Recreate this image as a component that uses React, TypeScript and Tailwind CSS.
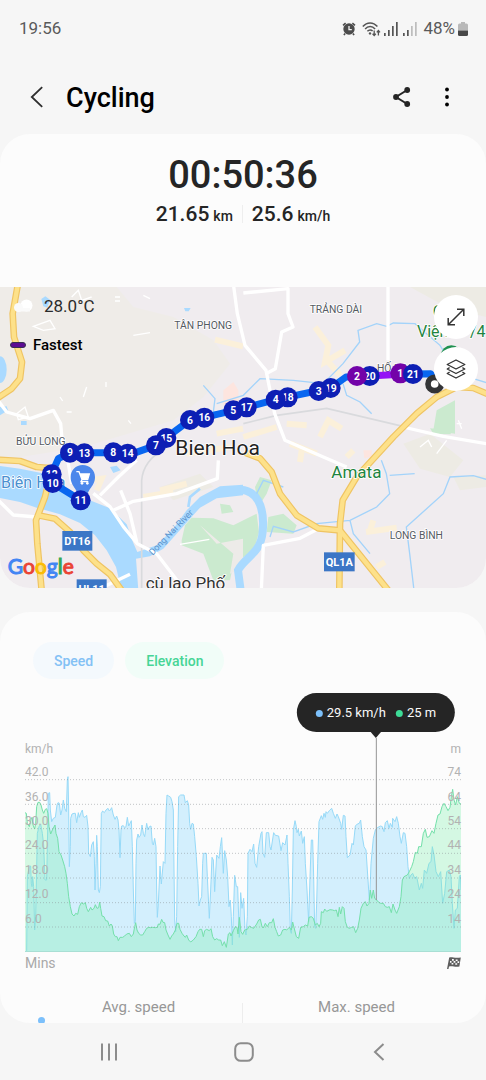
import React from "react";

type Pin = { n: number; x: number; y: number; fast?: boolean };

const PINS: Pin[] = [
  { n: 12, x: 155, y: 562 },
  { n: 10, x: 158, y: 588 },
  { n: 11, x: 242, y: 640 },
  { n: 9, x: 210, y: 497 },
  { n: 13, x: 253, y: 499 },
  { n: 8, x: 340, y: 496 },
  { n: 14, x: 383, y: 500 },
  { n: 15, x: 499, y: 453 },
  { n: 7, x: 468, y: 475 },
  { n: 6, x: 570, y: 399 },
  { n: 16, x: 613, y: 392 },
  { n: 5, x: 700, y: 370 },
  { n: 17, x: 740, y: 361 },
  { n: 18, x: 863, y: 331 },
  { n: 4, x: 827, y: 338 },
  { n: 19, x: 992, y: 303 },
  { n: 3, x: 956, y: 312 },
  { n: 20, x: 1109, y: 267 },
  { n: 2, x: 1071, y: 267, fast: true },
  { n: 1, x: 1201, y: 259, fast: true },
  { n: 21, x: 1239, y: 261 },
];

const SPEED =
  "80,664 82,440 88,410 92,408 94,460 96,470 98,440 101,470 104,600 107,560 112,310 117,290 122,282 127,310 131,345 135,450 140,450 143,300 145,190 149,188 151,240 155,275 160,265 166,262 171,225 174,218 178,220 182,255 186,240 190,210 194,235 199,245 202,150 204,140 206,240 208,410 211,350 212,265 216,252 222,250 226,250 230,278 235,248 238,262 243,248 247,240 250,260 255,262 260,256 264,290 266,370 271,380 275,345 280,335 283,380 285,480 288,400 290,316 292,350 295,480 298,488 301,470 304,250 308,243 313,248 318,240 324,235 328,243 331,240 335,233 340,255 345,268 350,258 354,270 357,300 360,383 363,300 365,288 370,287 374,293 378,290 382,262 386,288 390,280 394,272 397,350 400,480 403,580 406,575 408,400 410,330 414,312 417,322 422,315 426,285 430,310 434,320 440,280 444,300 448,290 453,288 457,340 460,345 464,325 468,350 470,480 472,562 475,520 480,408 484,462 490,395 495,400 498,250 501,195 506,198 512,202 516,215 520,240 522,420 524,570 527,605 530,560 533,350 536,200 542,195 552,195 556,218 562,212 566,225 569,280 572,298 576,280 580,282 584,320 589,380 594,460 597,528 601,510 605,500 608,400 610,370 619,370 622,440 628,565 632,480 636,382 640,390 644,485 650,375 657,385 661,350 665,323 670,430 674,362 679,390 683,440 687,530 691,510 694,560 697,645 700,560 704,436 709,470 713,470 718,622 722,488 726,535 731,505 735,600 738,615 742,560 744,370 750,358 756,365 761,342 765,400 770,412 776,350 783,310 786,305 789,370 794,382 799,308 806,308 810,350 813,360 821,308 826,316 836,318 843,362 848,338 855,345 861,315 864,400 868,500 871,600 874,610 877,480 880,300 885,272 889,290 891,308 895,298 898,318 904,303 908,340 913,320 916,400 921,480 926,575 930,440 934,330 938,330 941,440 944,590 947,595 950,520 953,400 957,275 964,257 968,268 972,250 976,262 978,245 982,250 988,242 995,235 1000,250 1006,265 1011,252 1015,260 1022,280 1025,298 1030,256 1035,258 1038,320 1042,383 1050,375 1056,340 1060,345 1066,288 1072,282 1078,280 1082,270 1087,320 1092,350 1098,360 1102,420 1108,510 1110,480 1113,400 1120,325 1126,300 1132,293 1142,288 1147,290 1152,305 1156,278 1162,272 1167,295 1171,280 1177,292 1178,265 1185,275 1190,260 1195,280 1200,320 1204,340 1210,308 1215,310 1220,350 1224,410 1228,445 1233,435 1238,430 1244,445 1250,440 1258,480 1264,460 1268,475 1273,420 1280,430 1287,400 1293,395 1297,350 1302,375 1308,425 1315,440 1322,425 1328,520 1334,490 1340,425 1348,420 1353,440 1357,520 1362,595 1366,540 1372,535 1378,440 1381,435 1383,480";

const ELEVATION =
  "75,248 79,250 82,280 88,290 93,268 96,262 99,285 104,297 107,280 110,230 114,217 119,217 123,225 127,240 131,250 136,238 140,236 144,250 147,290 152,312 157,300 165,285 168,310 173,325 177,365 183,375 188,390 194,410 198,430 202,460 206,500 211,530 216,552 222,558 227,550 233,553 238,530 244,518 250,522 256,518 260,535 265,545 272,532 276,540 282,535 286,524 291,535 296,533 299,516 302,535 306,558 312,560 317,572 323,573 328,588 333,582 337,588 341,612 346,620 351,620 355,632 360,622 368,622 374,618 380,612 388,610 394,620 400,612 404,590 407,578 411,600 416,610 422,615 428,615 434,605 440,595 446,592 452,593 458,592 466,593 472,592 475,582 480,583 485,568 489,577 494,578 498,600 504,615 510,628 515,618 520,612 526,600 531,580 536,580 540,598 546,610 552,618 556,622 560,615 566,630 572,636 580,630 588,620 594,605 599,598 605,598 610,620 614,602 620,598 628,602 633,596 638,620 644,630 650,626 656,630 662,630 667,647 673,635 679,652 685,612 690,608 693,618 700,602 706,590 711,592 714,612 718,562 723,605 728,613 734,600 742,598 748,588 754,592 761,595 770,582 776,570 781,568 786,590 790,594 796,580 802,590 808,578 815,578 820,566 825,592 830,605 835,618 842,615 848,600 855,598 860,600 868,592 874,600 878,576 884,600 889,620 896,625 902,592 910,590 916,585 923,588 927,562 934,560 940,565 946,585 952,580 957,590 962,580 964,545 970,548 974,537 980,544 990,539 998,540 1003,542 1009,540 1014,560 1018,532 1022,552 1027,530 1032,535 1036,575 1042,592 1048,595 1055,592 1061,590 1067,608 1073,595 1078,570 1083,535 1090,520 1096,515 1101,528 1107,520 1111,480 1115,505 1120,480 1124,505 1130,510 1135,516 1142,520 1150,520 1156,530 1162,532 1168,530 1174,548 1179,522 1185,540 1190,550 1198,530 1203,500 1207,450 1212,440 1222,435 1228,425 1235,410 1240,395 1246,367 1252,370 1256,350 1264,350 1270,310 1276,298 1281,322 1288,320 1296,302 1302,310 1308,280 1314,255 1320,252 1326,230 1332,220 1338,230 1344,242 1350,232 1354,200 1358,178 1362,210 1367,225 1372,200 1378,220 1383,222";

const SPEED_TICKS = ["42.0", "36.0", "30.0", "24.0", "18.0", "12.0", "6.0"];
const ELEVATION_TICKS = ["74", "64", "54", "44", "34", "24", "14"];
const GRID_LINES = [148, 222, 295, 369, 443, 517, 590];

const YELLOW_ROADS = [
  "M54 -10L38 80 42 150 66 225 60 275 35 305 -10 335",
  "M-10 518L60 522 110 540 160 544M148 575L135 630 108 700 112 770 125 910",
  "M115 685L165 695 210 735 250 790 290 830 330 862 365 910",
  "M1470 324L1420 303 1370 300 1310 330 1250 380 1180 450 1070 570 1028 640 1020 710 1018 910",
  "M735 497L780 514 815 555 840 620 890 685 955 724 1020 730 1165 910",
];

const WHITE_ROADS = [
  "M700 -10L712 80 735 175 798 250 824 380 855 460 970 510 1040 540",
  "M1164 -10V220M730 18L864 5V80L879 120 845 135 826 245 798 260",
  "M1209 420L1330 448 1470 472",
  "M-10 335L20 375 90 395 160 370 182 410 190 500",
  "M300 625L355 570 410 520M340 670L400 643 530 620 652 575 655 520M280 619L330 659 370 719 412 770 470 800 535 885M362 610L390 680 410 765M200 500L215 590",
  "M-10 635L40 684 110 690M310 900L390 862",
  "M949 728L900 754 790 775 784 910",
];

const STREAMS =
  "M650 350L730 325 780 275 880 280 970 290 1029 230 1079 165 1074 130 1130 110 1160 118 1180 108 1245 110 1320 175 1360 240M1029 290L1040 325 1080 345 1115 380M610 295L645 335 640 375 720 370M1360 280L1420 275 1470 290M810 750L820 718 880 735 950 710 1050 700 1130 660 1169 620 1159 560 1144 520M1169 565L1244 560M1050 700L1060 740 1110 800M1470 580L1420 566 1350 570 1330 620 1219 720 1229 800 1242 910M770 620L790 580 850 600";

const HALO = "stroke-white [paint-order:stroke] [stroke-linejoin:round] [stroke-width:5px]";
const DISTRICT = `${HALO} fill-[#555b62] text-[31px]`;
const PARK = `${HALO} fill-[#1e8440] text-[48px]`;

function RouteMap() {
  return (
    <svg
      viewBox="0 0 1458 903"
      preserveAspectRatio="xMidYMid slice"
      className="block h-full w-full"
      role="img"
      aria-label="Route map"
    >
      <rect width="1458" height="903" fill="#f0ecef" />
      <path d="M0 0H350L400 60 520 90 640 160 690 230 610 330 520 400 250 480 0 520Z" fill="#efece8" />
      <path d="M1230 0H1458V90L1340 60Z M1210 470L1290 440 1390 520 1350 570 1260 545Z M1360 570L1458 565V600L1380 610Z M480 600L600 560 640 600 520 640Z" fill="#edebe4" />
      <path
        d="M215 30l20-20 10 30 30-10M100 118l50-18 15 25-35 5zM430 25l20 10M345 30h15M345 42h15M260 300l-10 30M318 285v15M180 330l8 12M200 375h15M385 400l8 10M400 145l50-8M1260 480l25-20 10 20M1310 500l30-40M50 380l25-20 10 30-30 8z"
        fill="none"
        stroke="#fff"
        strokeWidth="4"
      />
      <path
        d="M645 158L729 178M945 120L985 175 975 225 1035 190M985 225L1020 265M730 450L830 420M860 410L920 415M960 450L985 400 1025 425M650 440L729 425M430 630L520 615M270 580L305 575 290 610M870 470L950 500M905 490L900 525M1040 510L1060 490M1098 735L1190 722M1120 700L1110 730M1130 840L1155 825M480 610L560 590M560 500L690 480"
        fill="none"
        stroke="#fbf0da"
        strokeWidth="18"
      />
      <path d="M670 310L700 285 715 310 715 350 670 355Z M1090 490l25 0 0 20-22 4z" fill="#fde5df" />
      <path
        d="M545 760L555 715 575 692 640 694 700 715 770 680 777 735 762 790 700 830 690 880 640 880 610 800 545 775Z M660 650L690 655 700 675 665 680Z M780 570L815 580 800 620 775 660 765 600Z M805 690L850 680 890 715 880 740 800 735Z M1310 370L1365 340 1365 440 1300 430Z M1290 424L1352 430V442L1300 440Z"
        fill="#cbeacf"
      />
      <path d="M600 715L650 770 729 755 729 840 690 860 700 800Z" fill="#edebe8" />
      <path d="M540 772L628 757M1375 400l10 25M1370 410h15" stroke="#fff" strokeWidth="4" fill="none" />
      <path
        d="M-5 536L60 545 135 560 205 610 260 636 330 664 380 712 400 768 412 795 470 775 520 725 560 670 600 630 660 598 729 593V625L650 634 600 662 570 695 530 740 490 785 450 808 408 815 415 910H365L348 840 320 790 285 745 240 708 180 682 110 662 60 645 -5 632Z"
        fill="#aadaff"
      />
      <path d="M722 608C765 610 796 650 788 735C782 800 735 810 714 850L722 910" fill="none" stroke="#aadaff" strokeWidth="24" />
      <path d="M565 660L570 630 600 605" fill="none" stroke="#aadaff" strokeWidth="8" />
      <ellipse cx="0" cy="248" rx="20" ry="40" fill="#aadaff" />
      <path d="M0 360L20 358 24 370 0 385Z M63 402h17v12h-17z M124 36l12-8 14 10-8 24-12-4z M552 63h20l-6 10h-10z M330 540l20-4 12 14-22 8z M120 718h18" fill="#aadaff" />
      <path d={STREAMS} fill="none" stroke="#a3d3fa" strokeWidth="4" />
      <path d="M425 905V580C428 540 450 510 500 480M730 410L830 385 980 364 1209 418" fill="none" stroke="#d9dadd" strokeWidth="5" />
      {WHITE_ROADS.map((d) => (
        <path key={d} d={d} fill="none" stroke="#fff" strokeWidth="10" strokeLinejoin="round" />
      ))}
      {YELLOW_ROADS.map((d) => (
        <path key={d} d={d} fill="none" stroke="#efc463" strokeWidth="20" strokeLinejoin="round" />
      ))}
      {YELLOW_ROADS.map((d) => (
        <path key={d} d={d} fill="none" stroke="#fde18a" strokeWidth="13" strokeLinejoin="round" />
      ))}

      <text x="523" y="126" className={DISTRICT}>TÂN PHONG</text>
      <text x="929" y="78" className={DISTRICT}>TRẢNG DÀI</text>
      <text x="1131" y="255" className={DISTRICT}>HỐ NAI</text>
      <text x="48" y="475" className={DISTRICT}>BỬU LONG</text>
      <text x="1169" y="757" className={DISTRICT}>LONG BÌNH</text>
      <text x="526" y="504" className={`${HALO} fill-[#222] text-[63px]`}>Bien Hoa</text>
      <text x="437" y="906" className={`${HALO} fill-[#333] text-[51px]`}>cù lao Phố</text>
      <text x="3" y="604" className={`${HALO} fill-[#4a8fd0] text-[48px]`}>Biên Hòa</text>
      <text x="994" y="572" className={`${HALO} fill-[#1e8440] text-[51px]`}>Amata</text>
      <text x="1298" y="90" className={PARK}>C</text>
      <text x="1251" y="151" className={PARK}>Viện</text>
      <text x="1410" y="151" className={PARK}>/4</text>
      <text transform="translate(458 806) rotate(-46)" className="fill-[#5b93cc] text-[27px]">Dong Nai River</text>
      <circle cx="1354" cy="206" r="31" fill="#1f9150" />

      <rect x="187" y="732" width="90" height="59" fill="#3b76c6" />
      <text x="232" y="773" textAnchor="middle" className="fill-white text-[33px] font-bold">DT16</text>
      <rect x="230" y="877" width="90" height="59" fill="#3b76c6" />
      <text x="275" y="918" textAnchor="middle" className="fill-white text-[33px] font-bold">HL11</text>
      <rect x="972" y="796" width="92" height="57" fill="#3b76c6" />
      <text x="1018" y="836" textAnchor="middle" className="fill-white text-[33px] font-bold">QL1A</text>

      <g fill="none" strokeWidth="21" strokeLinejoin="round" strokeLinecap="round">
        <path d="M242 640L158 588 155 560 175 515 210 497H340L400 499 468 475 500 451 570 399 613 391 740 361 827 338 992 303 1038 270 1109 267" stroke="#0866f0" />
        <path d="M1109 267L1201 262" stroke="#9512f5" />
        <path d="M1239 261L1292 260 1306 285" stroke="#0866f0" />
      </g>

      <path d="M248 534C227 534 212 549 212 570C212 598 232 602 240 640H256C264 602 285 598 285 570C285 549 269 534 248 534Z" fill="#4b87eb" />
      <path d="M229 554H237L246 578H263L268 561H240M246 578L243 584H265" fill="none" stroke="#fff" strokeWidth="4" />
      <path d="M240 561H268L263 576H246Z" fill="#fff" />
      <circle cx="246" cy="589" r="4" fill="#fff" />
      <circle cx="262" cy="589" r="4" fill="#fff" />

      <circle cx="1304" cy="291" r="20" fill="#fff" stroke="#333436" strokeWidth="17" />
      {PINS.map((p) => (
        <g key={p.n}>
          <circle cx={p.x} cy={p.y} r="30" fill={p.fast ? "#7303a8" : "#0d1fb4"} />
          <text x={p.x} y={p.y + 11} textAnchor="middle" className="fill-white text-[31px] font-bold">
            {p.n}
          </text>
        </g>
      ))}

      <text x="23" y="861" className="font-['Lato',sans-serif] text-[63px] [stroke-width:3px]">
        <tspan fill="#4285f4" stroke="#4285f4">G</tspan>
        <tspan fill="#ea4335" stroke="#ea4335">o</tspan>
        <tspan fill="#fbbc05" stroke="#fbbc05">o</tspan>
        <tspan fill="#4285f4" stroke="#4285f4">g</tspan>
        <tspan fill="#34a853" stroke="#34a853">l</tspan>
        <tspan fill="#ea4335" stroke="#ea4335">e</tspan>
      </text>
    </svg>
  );
}

function SignalIcon({ level }: { level: number }) {
  return (
    <svg viewBox="0 0 14 14" className="h-3.5 w-3.5" aria-hidden="true">
      {[3, 6, 10, 14].map((h, i) => (
        <rect key={h} x={i * 4} y={14 - h} width="1.7" height={h} fill={i < level ? "#555" : "#bdbdbd"} />
      ))}
    </svg>
  );
}

function StatusBar() {
  return (
    <div className="flex h-14 items-center justify-between pt-0.5 pr-[18px] pl-[19px] text-[17px] text-[#5a5a5a]">
      <span>19:56</span>
      <div className="flex items-center">
        <svg viewBox="0 0 14 14" className="h-3.5 w-3.5" aria-hidden="true">
          <circle cx="7" cy="7" r="5.700" fill="#4c4c4c" />
          <path d="M1 3.400L3.600 1.200M13 3.400L10.400 1.200M3 11.500L2 13.200M11 11.500L12 13.200" stroke="#4c4c4c" strokeWidth="1.600" />
          <path d="M7 4V7.600H9.800" fill="none" stroke="#f6f6f6" strokeWidth="1.300" />
        </svg>
        <svg viewBox="0 0 19 15" className="ml-1.5 h-[15px] w-[19px]" aria-hidden="true">
          <path d="M.8 4.6C5-.2 11.200-.2 15.400 4.600M3.100 7C6 3.700 10.200 3.700 13.100 7M5.400 9.300C7.100 7.500 9.100 7.500 10.600 9.100" fill="none" stroke="#555" strokeWidth="1.500" />
          <circle cx="8" cy="11.400" r="1.200" fill="#555" />
          <path d="M12.200 8.400V13.400M10.600 11.800L12.200 13.600 13.800 11.800M16.400 13.600V8.800M14.800 10.400L16.400 8.600 18 10.400" fill="none" stroke="#555" strokeWidth="1.300" />
        </svg>
        <span className="ml-[3px] flex gap-[5px]">
          <SignalIcon level={4} />
          <SignalIcon level={2} />
        </span>
        <span className="ml-1.5">48%</span>
        <svg viewBox="0 0 10 14" className="ml-[3px] h-3.5 w-2.5" aria-hidden="true">
          <path d="M3 0H7V1.500H8.500Q10 1.500 10 3V8.500H0V3Q0 1.500 1.500 1.500H3Z" fill="#b9b9b9" />
          <path d="M0 8.500H10V12.500Q10 14 8.500 14H1.500Q0 14 0 12.500Z" fill="#484848" />
        </svg>
      </div>
    </div>
  );
}

function Header() {
  return (
    <header className="flex h-[78px] items-center pt-1 pr-[31px] pl-[30px]">
      <button type="button" aria-label="Back">
        <svg viewBox="0 0 14 22" className="h-[22px] w-3.5" aria-hidden="true">
          <path d="M12.200 1.200L1.800 11 12.200 20.800" fill="none" stroke="#2e2e2e" strokeWidth="1.800" />
        </svg>
      </button>
      <h1 className="ml-[22px] flex-1 pt-0.5 text-[27px] leading-8 font-medium text-black">Cycling</h1>
      <button type="button" aria-label="Share">
        <svg viewBox="0 0 18 20" className="h-5 w-[18px]" aria-hidden="true">
          <path d="M14.200 3L3 10L14.200 17" fill="none" stroke="#252525" strokeWidth="2" />
          <circle cx="14.200" cy="3" r="2.900" fill="#252525" />
          <circle cx="3" cy="10" r="2.900" fill="#252525" />
          <circle cx="14.200" cy="17" r="2.900" fill="#252525" />
        </svg>
      </button>
      <button type="button" aria-label="More options" className="ml-7 flex w-4 justify-center">
        <svg viewBox="0 0 4 20" className="h-5 w-1" aria-hidden="true">
          <circle cx="2" cy="2.500" r="1.900" />
          <circle cx="2" cy="10" r="1.900" />
          <circle cx="2" cy="17.500" r="1.900" />
        </svg>
      </button>
    </header>
  );
}

function SummaryCard() {
  return (
    <section className="overflow-hidden rounded-[30px] bg-[#fcfcfc]">
      <div className="flex h-[153px] flex-col items-center pt-[19px] text-[#252525]">
        <p className="text-[38px] leading-[44px] font-medium">00:50:36</p>
        <div className="mt-[5px] flex items-center leading-6 font-medium">
          <p className="flex items-baseline gap-1">
            <span className="text-[21px]">21.65</span>
            <span className="text-sm">km</span>
          </p>
          <span className="mx-[9px] h-[18px] w-px bg-[#eee]" />
          <p className="flex items-baseline gap-1">
            <span className="text-[21px]">25.6</span>
            <span className="text-sm">km/h</span>
          </p>
        </div>
      </div>
      <div className="relative h-[301px]">
        <RouteMap />
        <div className="absolute top-2 left-2.5 flex flex-col gap-5">
          <div className="flex items-center text-[17px] leading-[22px] text-[#2b2b2b]">
            <svg viewBox="0 0 20 14" className="ml-[3px] h-3.5 w-5" aria-hidden="true">
              <circle cx="13.500" cy="6.500" r="6" fill="#fff" />
              <circle cx="5.500" cy="8.500" r="4.500" fill="#fafafa" />
              <path d="M4 9H17V12.500H4Z" fill="#fafafa" />
            </svg>
            <span className="ml-[11px]">28.0°C</span>
          </div>
          <div className="flex items-center gap-[7px] text-[15px] leading-4 font-medium text-black">
            <span className="h-1.5 w-4 rounded-full border border-[#3b3050] bg-[#5c0d92]" />
            <span>Fastest</span>
          </div>
        </div>
        <div className="absolute top-2 right-2 flex flex-col gap-2">
          <button type="button" aria-label="Full screen" className="flex size-11 items-center justify-center rounded-full bg-white">
            <svg viewBox="0 0 18 18" className="size-[18px]" aria-hidden="true">
              <path d="M1.500 16.500L16.500 1.500M10 1.200H16.800V8M1.200 10V16.800H8" fill="none" stroke="#333" strokeWidth="1.500" />
            </svg>
          </button>
          <button type="button" aria-label="Map layers" className="flex size-11 items-center justify-center rounded-full bg-white">
            <svg viewBox="0 0 20 20" className="size-5" aria-hidden="true">
              <path d="M10 1L18.800 5.500 10 10 1.200 5.500Z M3.600 8.600L1.200 10 10 14.500 18.800 10 16.400 8.600M3.600 13.100L1.200 14.500 10 19 18.800 14.500 16.400 13.100" fill="none" stroke="#333" strokeWidth="1.300" strokeLinejoin="round" />
            </svg>
          </button>
        </div>
      </div>
    </section>
  );
}

function Chart() {
  return (
    <figure className="relative mx-[25px] mt-3.5 pt-12 text-[#b2b2b2]">
      <div className="flex justify-between text-xs leading-4">
        <span>km/h</span>
        <span>m</span>
      </div>
      <div className="relative mt-0.5 h-[193px]">
        <svg
          viewBox="75 87 1308 579"
          preserveAspectRatio="none"
          className="block h-full w-full"
          role="img"
          aria-label="Speed and elevation over time"
        >
          <polygon points={`75,664 ${SPEED} 1383,664`} fill="#d3effd" />
          <polyline points={SPEED} fill="none" stroke="#97daf8" strokeWidth="1" vectorEffect="non-scaling-stroke" />
          <polygon points={`75,664 ${ELEVATION} 1383,664`} fill="#77efa9" fillOpacity="0.3" />
          <polyline points={ELEVATION} fill="none" stroke="#74e0aa" strokeWidth="1" vectorEffect="non-scaling-stroke" />
          {GRID_LINES.map((y) => (
            <path key={y} d={`M75 ${y + 1}H1383`} stroke="#8a8f94" strokeOpacity="0.5" strokeWidth="1" strokeDasharray="1 2" vectorEffect="non-scaling-stroke" />
          ))}
          <path d="M75 664.500H1383" stroke="#a9dfd4" strokeWidth="1" vectorEffect="non-scaling-stroke" />
        </svg>
        <div className="absolute inset-x-0 top-0 flex h-[172px] justify-between pt-px text-xs">
          <ul className="flex flex-col">
            {SPEED_TICKS.map((t) => (
              <li key={t} className="flex flex-1 items-center">{t}</li>
            ))}
          </ul>
          <ul className="flex flex-col">
            {ELEVATION_TICKS.map((t) => (
              <li key={t} className="flex flex-1 items-center justify-end">{t}</li>
            ))}
          </ul>
        </div>
      </div>
      <div className="absolute top-0 left-[80.500%] flex -translate-x-1/2 flex-col items-center">
        <div className="flex h-[39px] items-center rounded-full bg-[#252525] px-[19px] pt-px text-[13px] whitespace-nowrap text-[#fafafa]">
          <span className="mr-1 size-[7px] rounded-full bg-[#7cc0fb]" />
          29.5 km/h
          <span className="mr-1 ml-2.5 size-[7px] rounded-full bg-[#3ddc97]" />
          25 m
        </div>
        <svg viewBox="0 0 12 7" className="-mt-px h-[7px] w-3" aria-hidden="true">
          <path d="M0 0H12L6 7Z" fill="#252525" />
        </svg>
        <span className="h-[162px] w-px bg-[#959595]" />
      </div>
      <figcaption className="flex items-center justify-between text-sm leading-[22px] text-[#a9a9a9]">
        <span>Mins</span>
        <svg viewBox="0 0 14 12" className="h-3 w-3.5" aria-hidden="true">
          <path d="M2.200 0.500C5 -.3 7 1.300 13.800 .5L12.400 9.500C8 10.500 5.500 8.600 2 9.600L1.500 12H0Z" fill="#5e5e5e" />
          <path d="M5 2h1.800v1.700H5zM8.700 2.400h1.900v1.700H8.700zM6.600 4h1.800v1.700H6.600zM3 4h1.500v1.700H3zM10.500 4.300h1.700V6h-1.700zM4.600 6h1.700v1.500H4.600zM8.300 6.200h1.900v1.600H8.300z" fill="#fcfcfc" />
        </svg>
      </figcaption>
    </figure>
  );
}

function ChartCard() {
  return (
    <section className="mt-6 overflow-hidden rounded-[30px] bg-[#fcfcfc] pt-[30px]">
      <div className="flex gap-[11px] pl-[33px] text-sm font-medium">
        <button type="button" className="h-[37px] rounded-full bg-[#f4f9fd] px-[21px] text-[#83c1f5]">Speed</button>
        <button type="button" className="h-[37px] rounded-full bg-[#f1fdf8] px-[21px] text-[#47d596]">Elevation</button>
      </div>
      <Chart />
      <div className="mt-[23px] grid grid-cols-2 text-[15px] leading-5 text-[#979797]">
        <div className="relative h-[26px] pl-[34px] text-center">
          Avg. speed
          <span className="absolute -bottom-px left-[38px] size-[7px] rounded-full bg-[#7cc0fb]" />
          <span className="absolute right-0 bottom-0 h-5 w-px bg-[#ededed]" />
        </div>
        <div className="pr-4 text-center">Max. speed</div>
      </div>
    </section>
  );
}

function NavBar() {
  return (
    <nav className="grid h-[57px] grid-cols-3 items-center pt-px pr-[39px] pl-[41px] text-[#8c8c8c]">
      <button type="button" aria-label="Recent apps" className="flex justify-center">
        <svg viewBox="0 0 18 18" className="size-[18px]" aria-hidden="true">
          <path d="M2 0.500V17.500M9 0.500V17.500M16 0.500V17.500" stroke="currentColor" strokeWidth="2" />
        </svg>
      </button>
      <button type="button" aria-label="Home" className="flex justify-center">
        <svg viewBox="0 0 20 20" className="size-5" aria-hidden="true">
          <rect x="1.200" y="1.200" width="17.600" height="17.600" rx="5.500" fill="none" stroke="currentColor" strokeWidth="2" />
        </svg>
      </button>
      <button type="button" aria-label="Back" className="flex justify-center">
        <svg viewBox="0 0 12 18" className="h-[18px] w-3" aria-hidden="true">
          <path d="M10.500 1L2 9 10.500 17" fill="none" stroke="currentColor" strokeWidth="2" />
        </svg>
      </button>
    </nav>
  );
}

export default function App() {
  return (
    <div className="flex min-h-screen flex-col bg-[#f6f6f6] font-['Roboto',sans-serif]">
      <StatusBar />
      <Header />
      <main className="flex-1">
        <SummaryCard />
        <ChartCard />
      </main>
      <NavBar />
    </div>
  );
}
